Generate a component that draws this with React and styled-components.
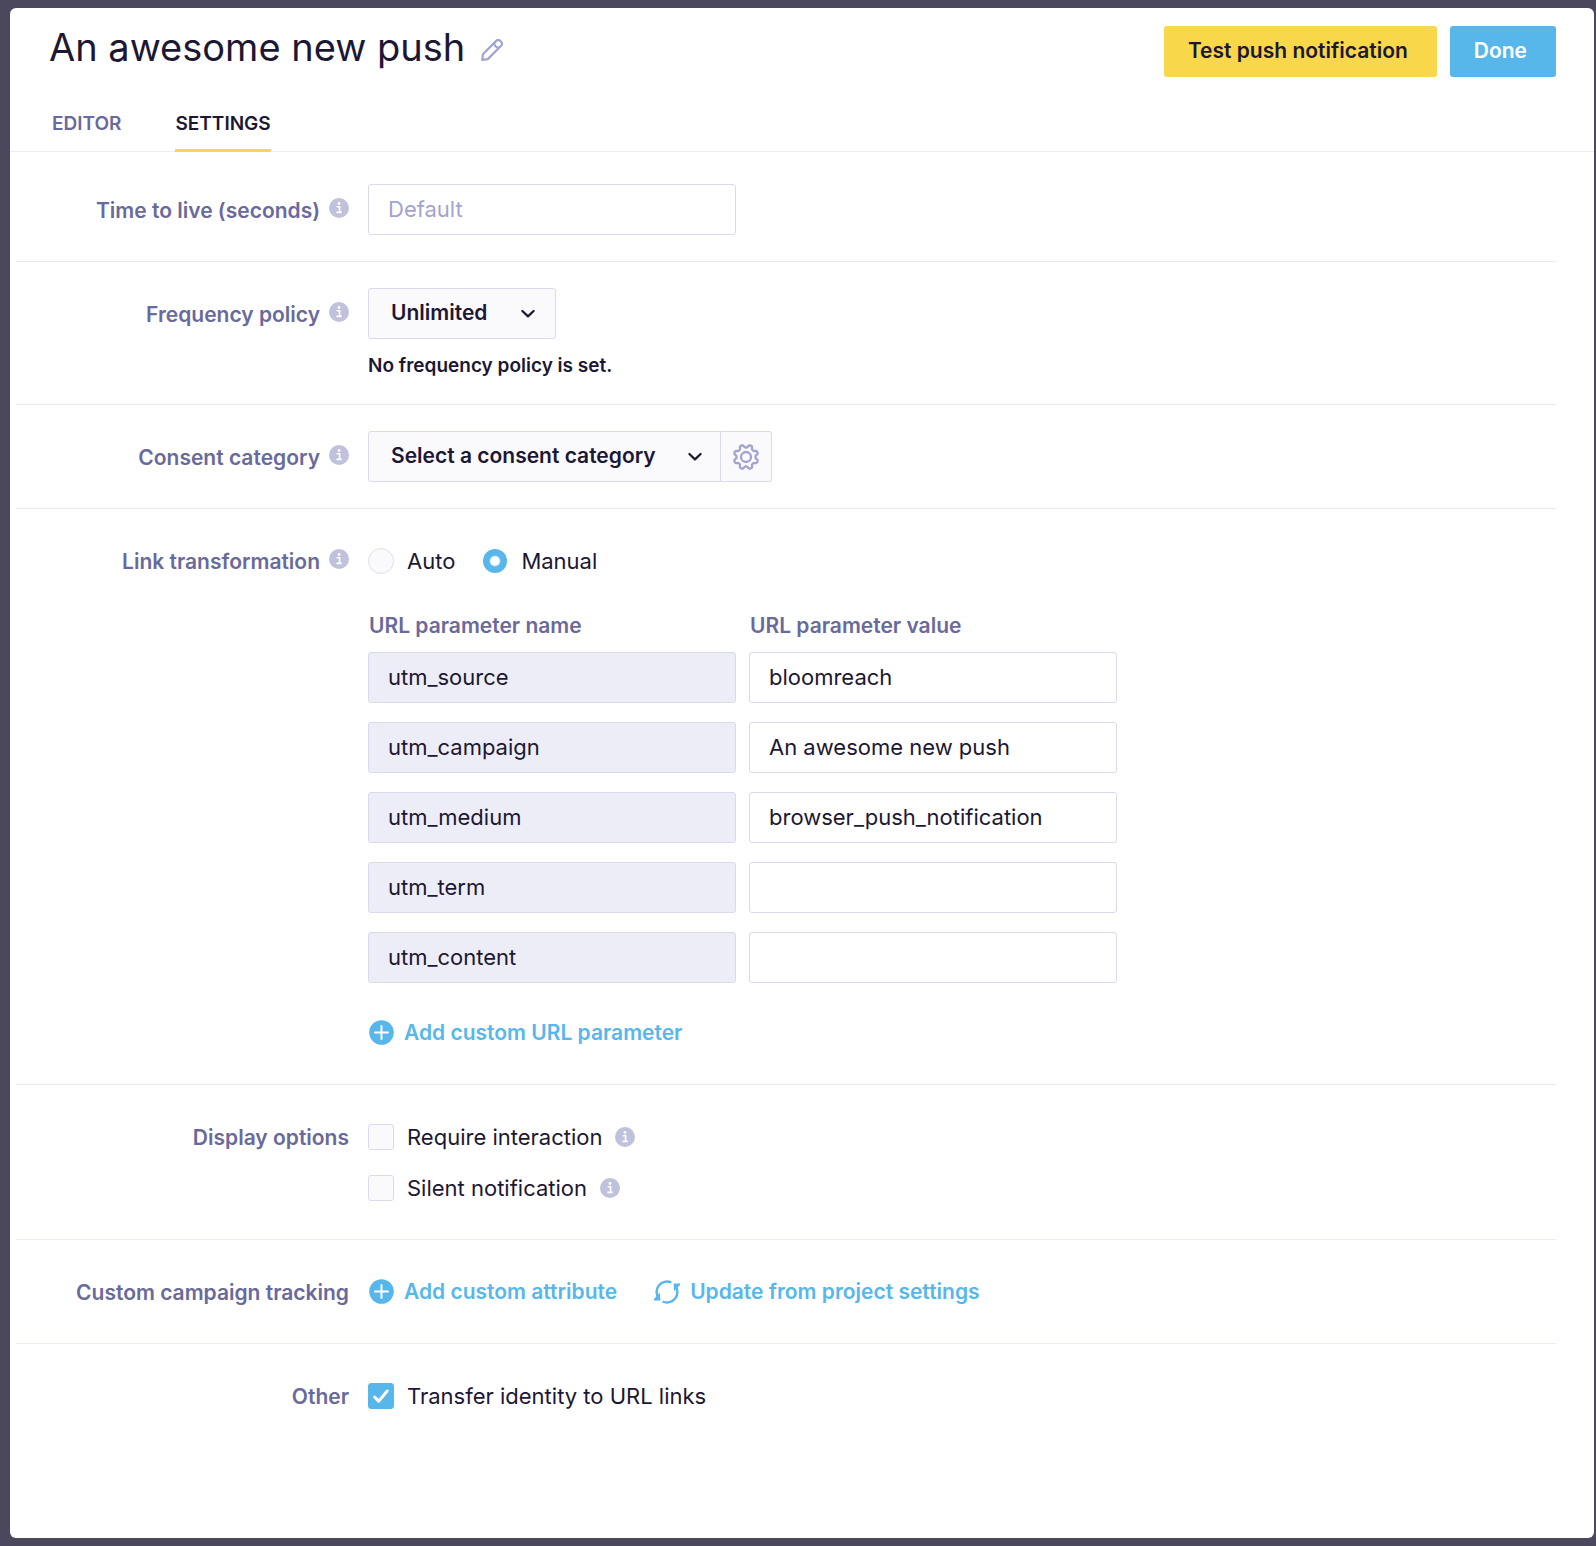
import React, { useState } from 'react';
import styled, { createGlobalStyle } from 'styled-components';

const GlobalStyle = createGlobalStyle`
  * {
    box-sizing: border-box;
  }
  body {
    margin: 0;
    font-family: Inter, 'Liberation Sans', sans-serif;
    color: #1c1733;
    background: #4b475c;
  }
  button, input, select {
    font-family: inherit;
    color: inherit;
  }
`;

const Page = styled.div`
  display: flex;
  min-height: 100vh;
  padding: 8px 2px 8px 10px;
`;

const Panel = styled.main`
  flex: 1;
  min-width: 0;
  background: #fff;
  border-radius: 6px;
`;

const Header = styled.header`
  display: flex;
  justify-content: space-between;
  align-items: flex-start;
  padding: 18px 38px 0 39px;
`;

const TitleGroup = styled.div`
  display: flex;
  align-items: center;
  gap: 16px;
`;

const Title = styled.h1`
  margin: 0;
  font-size: 38px;
  line-height: 42px;
  font-weight: 400;
`;

const IconButton = styled.button`
  display: flex;
  padding: 0;
  border: none;
  background: none;
  color: #a3a3d0;
  cursor: pointer;
`;

const RenameButton = styled(IconButton)`
  margin-top: 6px;
`;

const Actions = styled.div`
  display: flex;
  gap: 13px;
`;

const Button = styled.button`
  height: 51px;
  padding: 0 29px 2px 24px;
  border: none;
  border-radius: 3px;
  font-size: 21px;
  font-weight: 600;
  color: ${props => (props.$primary ? '#fff' : '#1c1733')};
  background: ${props => (props.$primary ? '#58b7ea' : '#f8d84a')};
  cursor: pointer;
`;

const Tabs = styled.nav`
  display: flex;
  gap: 54px;
  margin-top: 19px;
  padding-left: 42px;
  border-bottom: 1px solid #eeeef2;
`;

const Tab = styled.a`
  height: 56px;
  margin-bottom: -1px;
  padding-top: 16px;
  border-bottom: 3px solid ${props => (props.$active ? '#f8d84a' : 'transparent')};
  font-size: 19px;
  line-height: 24px;
  font-weight: 600;
  color: ${props => (props.$active ? '#1c1733' : '#696a9b')};
  text-decoration: none;
`;

const Settings = styled.form`
  padding: 6px 38px 60px 6px;
`;

const Row = styled.section`
  display: grid;
  grid-template-columns: 333px 1fr;
  column-gap: 19px;
  padding: 26px 0;
  border-bottom: 1px solid #ebebf5;

  &:last-child {
    border-bottom: none;
  }
`;

const RowLabel = styled.div`
  display: flex;
  justify-content: flex-end;
  align-items: center;
  gap: 9px;
  height: 51px;
  padding-top: 2px;
  font-size: 21px;
  font-weight: 600;
  color: #696a9b;
`;

const InfoWrap = styled.span`
  display: flex;
  padding-bottom: 6px;
`;

const Line = styled.div`
  display: flex;
  align-items: center;
  gap: ${props => props.$gap || 0}px;
  height: 51px;
`;

const Input = styled.input`
  display: block;
  width: 368px;
  height: 51px;
  padding: 0 19px 2px;
  border: 1px solid #d9dbec;
  border-radius: 3px;
  font-size: 22px;
  background: ${props => (props.readOnly ? '#ededf7' : '#fff')};

  &::placeholder {
    color: #a3a3d0;
    opacity: 1;
  }
`;

const SelectWrap = styled.div`
  display: inline-grid;
  align-items: center;

  > * {
    grid-area: 1 / 1;
  }
  > svg {
    justify-self: end;
    margin: 0 ${props => (props.$joined ? 18 : 20)}px 2px 0;
    pointer-events: none;
  }
`;

const Select = styled.select`
  appearance: none;
  height: 51px;
  padding: 0 ${props => (props.$joined ? 64 : 67)}px 2px 22px;
  border: 1px solid #d9dbec;
  border-radius: ${props => (props.$joined ? '3px 0 0 3px' : '3px')};
  font-size: 21px;
  font-weight: 600;
  background: #fafafd;
`;

const GearButton = styled(IconButton)`
  justify-content: center;
  align-items: center;
  width: 51px;
  height: 51px;
  border: 1px solid #d9dbec;
  border-left: none;
  border-radius: 0 3px 3px 0;
  background: #fafafd;
`;

const Note = styled.p`
  margin: 14px 0 0;
  font-size: 19px;
  line-height: 25px;
  font-weight: 600;
`;

const Option = styled.label`
  display: flex;
  align-items: center;
  gap: 13px;
  font-size: 22px;
`;

const Radio = styled.input`
  appearance: none;
  width: 26px;
  height: 26px;
  margin: 0;
  border: 1px solid #dedff0;
  border-radius: 50%;
  background: #fafafd;

  &:checked {
    border-color: transparent;
    background: radial-gradient(#fff 4px, #58b7ea 6px) padding-box;
  }
`;

const CheckWrap = styled.span`
  display: grid;
  place-items: center;

  > * {
    grid-area: 1 / 1;
  }
  > svg {
    pointer-events: none;
  }
`;

const Checkbox = styled.input`
  appearance: none;
  width: 26px;
  height: 26px;
  margin: 0;
  border: 1px solid #d9dbec;
  border-radius: 3px;
  background: #fafafd;

  &:checked {
    border-color: #58b7ea;
    background: #58b7ea;
  }
`;

const ParamTable = styled.table`
  border-collapse: collapse;

  th {
    padding: 28px 0 14px 1px;
    font-size: 21px;
    line-height: 24px;
    font-weight: 600;
    text-align: left;
    color: #696a9b;
  }
  td {
    padding: 0 13px 19px 0;
  }
`;

const LinkLine = styled(Line)`
  margin-top: 5px;
`;

const LinkButton = styled(IconButton)`
  align-items: center;
  gap: 10px;
  padding-left: 1px;
  font-size: 21px;
  font-weight: 600;
  color: #58b7ea;
`;

const InfoIcon = () => (
  <svg width="20" height="20" viewBox="0 0 20 20" aria-hidden="true">
    <circle cx="10" cy="10" r="10" fill="#c0c1dc" />
    <circle cx="10" cy="5.5" r="1.4" fill="#fff" />
    <path d="M7.6 8.7h3v5.6M7.4 14.4h5.4" fill="none" stroke="#fff" strokeWidth="1.6" />
  </svg>
);

const PencilIcon = () => (
  <svg width="22" height="22" viewBox="0 0 22 22" fill="none" stroke="currentColor" strokeWidth="2.2" strokeLinejoin="round" aria-hidden="true">
    <path d="M1.2 20.8l.7-5.6L15.2 1.9a2.9 2.9 0 0 1 4.1 0l.8.8a2.9 2.9 0 0 1 0 4.1L6.8 20.1z" />
    <path d="M13.1 4q.4 4.4 4.9 4.9" />
  </svg>
);

const ChevronIcon = () => (
  <svg width="16" height="16" viewBox="0 0 16 16" fill="none" stroke="#1c1733" strokeWidth="2.2" strokeLinecap="round" strokeLinejoin="round" aria-hidden="true">
    <path d="M2.4 6L8 11.4 13.6 6" />
  </svg>
);

// eight rounded teeth, with a notch at the top
const gearOutline = Array.from({ length: 96 }, (_, i) => {
  const angle = (i / 96) * Math.PI * 2;
  const radius = 10.9 - 1.5 * Math.tanh(1.8 * Math.cos(8 * angle));
  return `${(14 + radius * Math.sin(angle)).toFixed(2)},${(14 - radius * Math.cos(angle)).toFixed(2)}`;
}).join(' ');

const GearIcon = () => (
  <svg width="28" height="28" viewBox="0 0 28 28" fill="none" stroke="currentColor" strokeWidth="2.3" strokeLinejoin="round" aria-hidden="true">
    <circle cx="14" cy="14" r="5" />
    <polygon points={gearOutline} />
  </svg>
);

const PlusIcon = () => (
  <svg width="25" height="25" viewBox="0 0 25 25" aria-hidden="true">
    <circle cx="12.5" cy="12.5" r="12.3" fill="currentColor" />
    <path d="M12.5 6v13M6 12.5h13" stroke="#fff" strokeWidth="2" strokeLinecap="round" />
  </svg>
);

const RefreshIcon = () => (
  <svg width="26" height="24" viewBox="0 0 26 24" fill="none" stroke="currentColor" strokeWidth="2.4" aria-hidden="true">
    <path d="M5.2 18.8A10.4 10.4 0 0 1 17.4 2.5" />
    <path d="M20.8 5.2A10.4 10.4 0 0 1 8.6 21.5" />
    <path d="M25.4 4.4h-5l.4 5z" fill="currentColor" strokeWidth="1.6" />
    <path d="M.6 19.6h5l-.4-5z" fill="currentColor" strokeWidth="1.6" />
  </svg>
);

const CheckIcon = () => (
  <svg width="18" height="18" viewBox="0 0 18 18" fill="none" stroke="#fff" strokeWidth="3" strokeLinecap="round" strokeLinejoin="round" aria-hidden="true">
    <path d="M2.6 10l4 4.2L15.2 4" />
  </svg>
);

const Info = () => (
  <InfoWrap>
    <InfoIcon />
  </InfoWrap>
);

const CheckOption = ({ label, info, defaultChecked = false }) => {
  const [checked, setChecked] = useState(defaultChecked);

  return (
    <Line $gap={13}>
      <Option>
        <CheckWrap>
          <Checkbox type="checkbox" checked={checked} onChange={() => setChecked(!checked)} />
          {checked && <CheckIcon />}
        </CheckWrap>
        {label}
      </Option>
      {info && <InfoIcon />}
    </Line>
  );
};

const params = [
  { name: 'utm_source', value: 'bloomreach' },
  { name: 'utm_campaign', value: 'An awesome new push' },
  { name: 'utm_medium', value: 'browser_push_notification' },
  { name: 'utm_term', value: '' },
  { name: 'utm_content', value: '' },
];

const App = () => {
  const [mode, setMode] = useState('manual');

  return (
    <>
      <GlobalStyle />
      <Page>
        <Panel>
          <Header>
            <TitleGroup>
              <Title>An awesome new push</Title>
              <RenameButton type="button" aria-label="Rename">
                <PencilIcon />
              </RenameButton>
            </TitleGroup>
            <Actions>
              <Button type="button">Test push notification</Button>
              <Button type="button" $primary>Done</Button>
            </Actions>
          </Header>
          <Tabs>
            <Tab href="#editor">EDITOR</Tab>
            <Tab href="#settings" $active>SETTINGS</Tab>
          </Tabs>
          <Settings>
            <Row>
              <RowLabel>
                <label htmlFor="ttl">Time to live (seconds)</label>
                <Info />
              </RowLabel>
              <Input id="ttl" type="text" placeholder="Default" />
            </Row>
            <Row>
              <RowLabel>
                <label htmlFor="frequency">Frequency policy</label>
                <Info />
              </RowLabel>
              <div>
                <Line>
                  <SelectWrap>
                    <Select id="frequency">
                      <option>Unlimited</option>
                    </Select>
                    <ChevronIcon />
                  </SelectWrap>
                </Line>
                <Note>No frequency policy is set.</Note>
              </div>
            </Row>
            <Row>
              <RowLabel>
                <label htmlFor="consent">Consent category</label>
                <Info />
              </RowLabel>
              <Line>
                <SelectWrap $joined>
                  <Select id="consent" $joined>
                    <option>Select a consent category</option>
                  </Select>
                  <ChevronIcon />
                </SelectWrap>
                <GearButton type="button" aria-label="Manage consent categories">
                  <GearIcon />
                </GearButton>
              </Line>
            </Row>
            <Row>
              <RowLabel>
                Link transformation
                <Info />
              </RowLabel>
              <div>
                <Line $gap={27}>
                  <Option>
                    <Radio type="radio" name="mode" checked={mode === 'auto'} onChange={() => setMode('auto')} />
                    Auto
                  </Option>
                  <Option>
                    <Radio type="radio" name="mode" checked={mode === 'manual'} onChange={() => setMode('manual')} />
                    Manual
                  </Option>
                </Line>
                <ParamTable>
                  <thead>
                    <tr>
                      <th>URL parameter name</th>
                      <th>URL parameter value</th>
                    </tr>
                  </thead>
                  <tbody>
                    {params.map(param => (
                      <tr key={param.name}>
                        <td>
                          <Input readOnly value={param.name} aria-label="URL parameter name" />
                        </td>
                        <td>
                          <Input defaultValue={param.value} aria-label={`${param.name} value`} />
                        </td>
                      </tr>
                    ))}
                  </tbody>
                </ParamTable>
                <LinkLine>
                  <LinkButton type="button">
                    <PlusIcon />
                    Add custom URL parameter
                  </LinkButton>
                </LinkLine>
              </div>
            </Row>
            <Row>
              <RowLabel>Display options</RowLabel>
              <div>
                <CheckOption label="Require interaction" info />
                <CheckOption label="Silent notification" info />
              </div>
            </Row>
            <Row>
              <RowLabel>Custom campaign tracking</RowLabel>
              <Line $gap={36}>
                <LinkButton type="button">
                  <PlusIcon />
                  Add custom attribute
                </LinkButton>
                <LinkButton type="button">
                  <RefreshIcon />
                  Update from project settings
                </LinkButton>
              </Line>
            </Row>
            <Row>
              <RowLabel>Other</RowLabel>
              <CheckOption label="Transfer identity to URL links" defaultChecked />
            </Row>
          </Settings>
        </Panel>
      </Page>
    </>
  );
};

export default App;
